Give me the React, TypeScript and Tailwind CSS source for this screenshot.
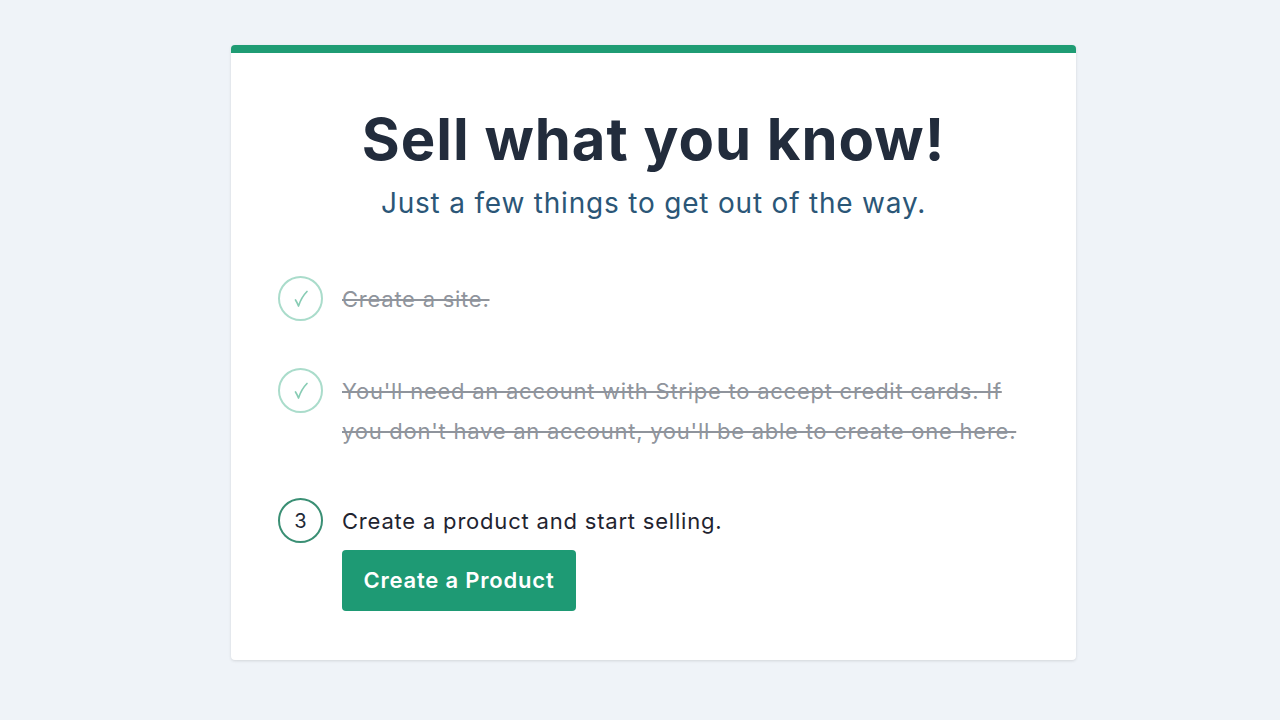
import React from 'react';

type Step = {
    text: string;
    done: boolean;
    number: number;
};

const steps: Step[] = [
    { number: 1, text: 'Create a site.', done: true },
    {
        number: 2,
        text: "You'll need an account with Stripe to accept credit cards. If you don't have an account, you'll be able to create one here.",
        done: true,
    },
    { number: 3, text: 'Create a product and start selling.', done: false },
];

function StepBadge({ step }: { step: Step }) {
    if (step.done) {
        return (
            <div className="w-[45px] h-[45px] shrink-0 rounded-full border-2 border-[#aadccb] flex items-center justify-center">
                <svg width="16" height="18" viewBox="0 0 16 18" fill="none" className="mt-[1px]">
                    <path d="M2.5 10 C3.5 11.5 4.5 13.5 5.5 16 C7.5 10 10 5.5 14 1.5" stroke="#88ccb4" strokeWidth="1.7" strokeLinecap="round" strokeLinejoin="round" />
                </svg>
            </div>
        );
    }
    return (
        <div className="w-[45px] h-[45px] shrink-0 rounded-full border-2 border-[#3a8f74] flex items-center justify-center text-[20px] text-[#1f2a37]">
            {step.number}
        </div>
    );
}

export default function App() {
    return (
        <div className="min-h-screen bg-[#eff3f8] pt-[45px]" style={{ fontFamily: 'Inter, "Open Sans", sans-serif' }}>
            <div className="w-[845px] ml-[231px] h-[615px] bg-white rounded-[4px] border-t-[8px] border-[#1f9c74] shadow-[0_1px_3px_rgba(0,0,0,0.12)]">
                {/* Header */}
                <div className="text-center pt-[50px]">
                    <h1 className="text-[58px] leading-[72px] font-bold text-[#222c3c] tracking-[1px]">Sell what you know!</h1>
                    <p className="mt-[10px] text-[28px] leading-[36px] text-[#2b5677] tracking-[0.8px]">Just a few things to get out of the way.</p>
                </div>

                {/* Steps */}
                <div className="pl-[47px] pr-[40px] mt-[55px] flex flex-col gap-[47px]">
                    {steps.map((step) => (
                        <div key={step.number} className="flex items-start gap-[19px]">
                            <StepBadge step={step} />
                            <div className="pt-[3px]">
                                <p
                                    className={
                                        step.done
                                            ? 'text-[22px] leading-[40px] text-[#8f949c] line-through tracking-[0.75px] max-w-[684px]'
                                            : 'text-[22px] leading-[40px] text-[#1f2430] tracking-[0.8px]'
                                    }
                                >
                                    {step.text}
                                </p>
                                {!step.done && (
                                    <button className="mt-[9px] w-[234px] h-[61px] rounded-[4px] bg-[#1e9a74] text-white text-[22px] font-semibold tracking-[0.8px]">
                                        Create a Product
                                    </button>
                                )}
                            </div>
                        </div>
                    ))}
                </div>
            </div>
        </div>
    );
}
